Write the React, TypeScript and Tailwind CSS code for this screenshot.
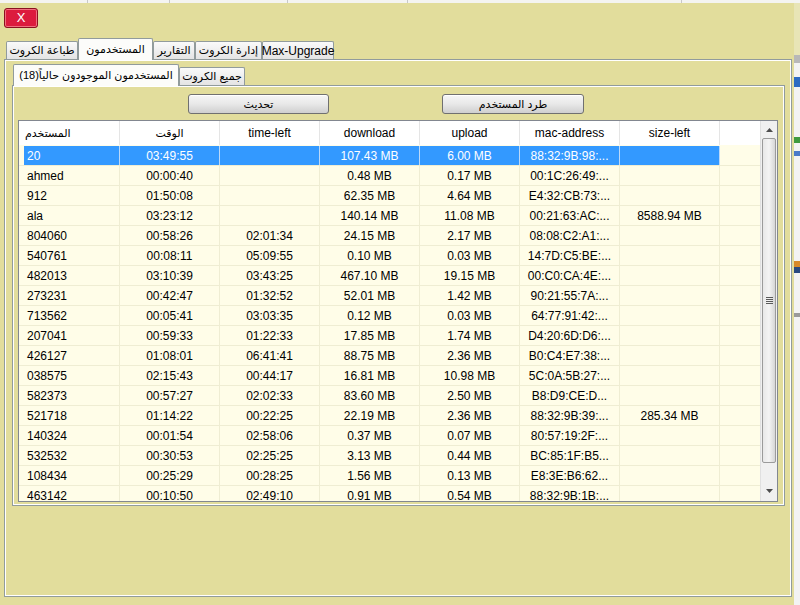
import React from 'react';

type Row = {
    user: string;
    time: string;
    left: string;
    down: string;
    up: string;
    mac: string;
    size: string;
};

const rows: Row[] = [
    { user: '20', time: '03:49:55', left: '', down: '107.43 MB', up: '6.00 MB', mac: '88:32:9B:98:...', size: '' },
    { user: 'ahmed', time: '00:00:40', left: '', down: '0.48 MB', up: '0.17 MB', mac: '00:1C:26:49:...', size: '' },
    { user: '912', time: '01:50:08', left: '', down: '62.35 MB', up: '4.64 MB', mac: 'E4:32:CB:73:...', size: '' },
    { user: 'ala', time: '03:23:12', left: '', down: '140.14 MB', up: '11.08 MB', mac: '00:21:63:AC:...', size: '8588.94 MB' },
    { user: '804060', time: '00:58:26', left: '02:01:34', down: '24.15 MB', up: '2.17 MB', mac: '08:08:C2:A1:...', size: '' },
    { user: '540761', time: '00:08:11', left: '05:09:55', down: '0.10 MB', up: '0.03 MB', mac: '14:7D:C5:BE:...', size: '' },
    { user: '482013', time: '03:10:39', left: '03:43:25', down: '467.10 MB', up: '19.15 MB', mac: '00:C0:CA:4E:...', size: '' },
    { user: '273231', time: '00:42:47', left: '01:32:52', down: '52.01 MB', up: '1.42 MB', mac: '90:21:55:7A:...', size: '' },
    { user: '713562', time: '00:05:41', left: '03:03:35', down: '0.12 MB', up: '0.03 MB', mac: '64:77:91:42:...', size: '' },
    { user: '207041', time: '00:59:33', left: '01:22:33', down: '17.85 MB', up: '1.74 MB', mac: 'D4:20:6D:D6:...', size: '' },
    { user: '426127', time: '01:08:01', left: '06:41:41', down: '88.75 MB', up: '2.36 MB', mac: 'B0:C4:E7:38:...', size: '' },
    { user: '038575', time: '02:15:43', left: '00:44:17', down: '16.81 MB', up: '10.98 MB', mac: '5C:0A:5B:27:...', size: '' },
    { user: '582373', time: '00:57:27', left: '02:02:33', down: '83.60 MB', up: '2.50 MB', mac: 'B8:D9:CE:D...', size: '' },
    { user: '521718', time: '01:14:22', left: '00:22:25', down: '22.19 MB', up: '2.36 MB', mac: '88:32:9B:39:...', size: '285.34 MB' },
    { user: '140324', time: '00:01:54', left: '02:58:06', down: '0.37 MB', up: '0.07 MB', mac: '80:57:19:2F:...', size: '' },
    { user: '532532', time: '00:30:53', left: '02:25:25', down: '3.13 MB', up: '0.44 MB', mac: 'BC:85:1F:B5...', size: '' },
    { user: '108434', time: '00:25:29', left: '00:28:25', down: '1.56 MB', up: '0.13 MB', mac: 'E8:3E:B6:62...', size: '' },
    { user: '463142', time: '00:10:50', left: '02:49:10', down: '0.91 MB', up: '0.54 MB', mac: '88:32:9B:1B:...', size: '' },
];

const outerTabs = [
    { label: 'طباعة الكروت', w: 'w-[72px]', active: false, ar: true },
    { label: 'المستخدمون', w: 'w-[75px]', active: true, ar: true },
    { label: 'التقارير', w: 'w-[42px]', active: false, ar: true },
    { label: 'إدارة الكروت', w: 'w-[67px]', active: false, ar: true },
    { label: 'Max-Upgrade', w: 'w-[72px]', active: false, ar: false },
];

function Tab({ label, w, active, ar }: { label: string; w: string; active: boolean; ar: boolean }) {
    const size = ar ? 'text-[11px]' : 'text-[12px]';
    if (active) {
        return (
            <div dir={ar ? 'rtl' : 'ltr'} className={`${w} h-[22px] -mb-px relative z-10 flex items-center justify-center bg-[#fcfcfa] border border-b-0 border-[#919b9c] rounded-t-[2px] ${size} whitespace-nowrap`}>
                {label}
            </div>
        );
    }
    return (
        <div dir={ar ? 'rtl' : 'ltr'} className={`${w} h-[18px] flex items-center justify-center bg-gradient-to-b from-[#fafafa] to-[#e4e4e4] border border-b-0 border-[#919b9c] rounded-t-[2px] ${size} whitespace-nowrap`}>
            {label}
        </div>
    );
}

function Button({ label, w }: { label: string; w: string }) {
    return (
        <div className={`${w} h-[20px] flex items-center justify-center rounded-[3px] border border-[#707070] bg-gradient-to-b from-[#f6f6f6] via-[#e8e8e8] to-[#cfcfcf] text-[11px] shadow-[inset_0_1px_0_#ffffff]`}>
            {label}
        </div>
    );
}

function ScrollBar() {
    return (
        <div className="w-[17px] flex flex-col bg-[#f0f0f0] border-l border-[#e0e0e0]">
            <div className="h-[17px] flex items-center justify-center">
                <svg width="7" height="4" viewBox="0 0 7 4"><path d="M0 4 L3.5 0 L7 4 Z" fill="#4d4d4d" /></svg>
            </div>
            <div className="h-[325px] mx-px rounded-[2px] border border-[#9b9b9b] bg-gradient-to-r from-[#e8e8e8] via-[#f4f4f4] to-[#d6d6d6] flex items-center justify-center">
                <div className="flex flex-col gap-[1px]">
                    <div className="w-[7px] h-px bg-[#5a5a5a]" />
                    <div className="w-[7px] h-px bg-[#5a5a5a]" />
                    <div className="w-[7px] h-px bg-[#5a5a5a]" />
                    <div className="w-[7px] h-px bg-[#5a5a5a]" />
                </div>
            </div>
            <div className="flex-1" />
            <div className="h-[20px] flex items-center justify-center">
                <svg width="7" height="4" viewBox="0 0 7 4"><path d="M0 0 L3.5 4 L7 0 Z" fill="#4d4d4d" /></svg>
            </div>
        </div>
    );
}

function DataRow({ row, selected }: { row: Row; selected: boolean }) {
    const cell = selected
        ? 'w-[100px] h-full flex items-center justify-center border-r border-[#bcd9f8] whitespace-nowrap'
        : 'w-[100px] h-full flex items-center justify-center border-r border-[#efedd3] whitespace-nowrap';
    return (
        <div className="h-[20px] shrink-0 flex border-b border-[#efedd3] bg-[#fffde8] text-[12px]">
            <div className="w-[5px]" />
            <div className={`flex h-full ${selected ? 'bg-[#3399ff] text-white' : 'text-black'}`}>
                <div className={`w-[96px] h-full flex items-center pl-[3px] border-r ${selected ? 'border-[#bcd9f8]' : 'border-[#efedd3]'}`}>{row.user}</div>
                <div className={cell}>{row.time}</div>
                <div className={cell}>{row.left}</div>
                <div className={cell}>{row.down}</div>
                <div className={cell}>{row.up}</div>
                <div className={cell}>{row.mac}</div>
                <div className={cell}>{row.size}</div>
            </div>
            <div className="flex-1" />
        </div>
    );
}

function UsersTable() {
    const head = 'w-[100px] h-full flex items-center justify-center border-r border-[#e5e5e5]';
    return (
        <div className="ml-[5px] mt-[6px] w-[760px] h-[382px] border border-[#828790] flex bg-white overflow-hidden">
            <div className="flex-1 flex flex-col overflow-hidden">
                <div className="h-[24px] flex bg-white text-[12px] shrink-0">
                    <div className="w-[101px] h-full flex items-center pl-[6px] border-r border-[#e5e5e5] text-[11px]">المستخدم</div>
                    <div className={`${head} text-[11px]`}>الوقت</div>
                    <div className={head}>time-left</div>
                    <div className={head}>download</div>
                    <div className={head}>upload</div>
                    <div className={head}>mac-address</div>
                    <div className={head}>size-left</div>
                    <div className="flex-1" />
                </div>
                <div className="flex-1 flex flex-col bg-[#fffde8] overflow-hidden pt-px">
                    {rows.map((r, i) => (
                        <DataRow key={r.user} row={r} selected={i === 0} />
                    ))}
                </div>
            </div>
            <ScrollBar />
        </div>
    );
}

export default function App() {
    return (
        <div className="w-[800px] h-[605px] bg-[#e2dd9c] flex flex-col overflow-hidden text-black" style={{ fontFamily: '"Liberation Sans", "DejaVu Sans", sans-serif' }}>
            {/* strip of the window behind */}
            <div className="h-[3px] flex bg-[#f4f4f1]">
                <div className="w-[88px] border-r border-[#c8c8c8]" />
                <div className="w-[82px] border-r border-[#c8c8c8]" />
                <div className="w-[118px] border-r border-[#c8c8c8]" />
                <div className="w-[120px] border-r border-[#c8c8c8]" />
                <div className="w-[274px] border-r border-[#c8c8c8]" />
                <div className="flex-1" />
            </div>
            <div className="flex flex-1">
                <div className="w-[794px] flex flex-col pl-[4px] pb-[8px]">
                    <div className="mt-[5px] w-[34px] h-[20px] rounded-[3px] border border-[#8a1020] bg-[#dc1b3d] shadow-[inset_0_0_0_1px_#f07080] flex items-center justify-center text-white text-[13px]">
                        X
                    </div>
                    <div className="mt-[10px] ml-[2px] flex items-end h-[21px]">
                        {outerTabs.map(t => (
                            <Tab key={t.label} label={t.label} w={t.w} active={t.active} ar={t.ar} />
                        ))}
                    </div>
                    <div className="w-[788px] flex-1 border border-[#919b9c] shadow-[inset_1px_1px_0_#ffffff,inset_-1px_-1px_0_#ffffff] pl-[7px] pt-[5px] flex flex-col">
                        <div className="ml-[1px] flex items-end h-[20px]">
                            <Tab label="المستخدمون الموجودون حالياً(18)" w="w-[166px]" active ar />
                            <Tab label="جميع الكروت" w="w-[66px]" active={false} ar />
                        </div>
                        <div className="w-[773px] h-[421px] border border-[#919b9c] shadow-[inset_1px_1px_0_#ffffff,inset_-1px_-1px_0_#ffffff] flex flex-col pt-[8px]">
                            <div className="flex">
                                <div className="ml-[175px]">
                                    <Button label="تحديث" w="w-[141px]" />
                                </div>
                                <div className="ml-[113px]">
                                    <Button label="طرد المستخدم" w="w-[142px]" />
                                </div>
                            </div>
                            <UsersTable />
                        </div>
                    </div>
                </div>
                {/* edge of another window */}
                <div className="flex-1 flex flex-col bg-[#f3f3f3]">
                    <div className="h-[52px] bg-[#e8e5b6]" />
                    <div className="h-[8px] bg-[#b8b8b8]" />
                    <div className="h-[14px]" />
                    <div className="h-[10px] bg-[#2d6bc2]" />
                    <div className="h-[50px]" />
                    <div className="h-[6px] bg-[#3f9a3f]" />
                    <div className="h-[8px]" />
                    <div className="h-[5px] bg-[#4a7ac8]" />
                    <div className="h-[105px]" />
                    <div className="h-[6px] bg-[#d88a2a]" />
                    <div className="h-[6px] bg-[#2a4a80]" />
                    <div className="h-[40px]" />
                    <div className="h-[4px] bg-[#9a9a9a]" />
                    <div className="flex-1" />
                </div>
            </div>
        </div>
    );
}
